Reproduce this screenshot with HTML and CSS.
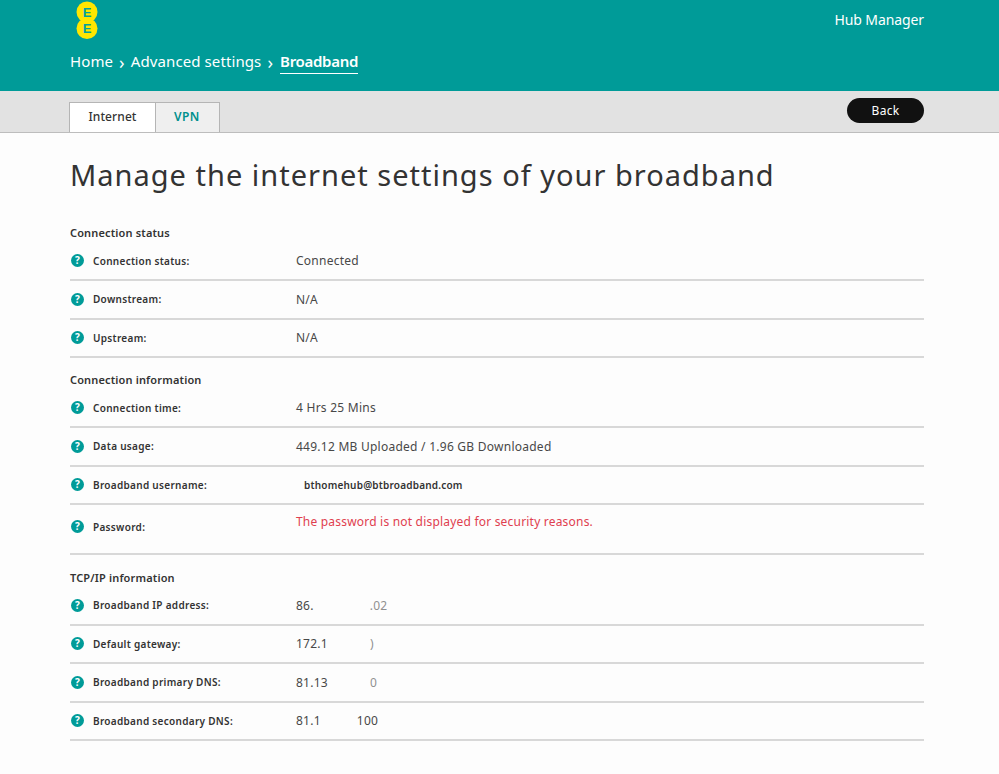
FILE: index.html
```html
<!DOCTYPE html>
<html>
<head>
  <title>Hub Manager</title>
  <link rel="stylesheet" href="styles.css">
</head>
<body>
  <div class="header">
    <div class="header-top">
      <svg class="logo" width="22" height="36" viewBox="0 0 22 36">
        <circle cx="11" cy="10" r="10.5" fill="#ffe600"/>
        <circle cx="11" cy="26.5" r="10.5" fill="#ffe600"/>
        <text x="11" y="14.7" class="logo-letter">E</text>
        <text x="11" y="31.2" class="logo-letter">E</text>
      </svg>
      <span class="app-name">Hub Manager</span>
    </div>
    <div class="breadcrumb">
      <span>Home</span>
      <span class="sep">&rsaquo;</span>
      <span>Advanced settings</span>
      <span class="sep">&rsaquo;</span>
      <span class="current">Broadband</span>
    </div>
  </div>

  <div class="tabbar">
    <div class="tabs">
      <div class="tab active">Internet</div>
      <div class="tab">VPN</div>
    </div>
    <div class="back-button">Back</div>
  </div>

  <div class="content">
    <h1 class="title">Manage the internet settings of your broadband</h1>

    <p class="section-title">Connection status</p>
    <div class="row">
      <span class="help">?</span><span class="label">Connection status:</span>
      <span class="value">Connected</span>
    </div>
    <div class="row">
      <span class="help">?</span><span class="label">Downstream:</span>
      <span class="value">N/A</span>
    </div>
    <div class="row">
      <span class="help">?</span><span class="label">Upstream:</span>
      <span class="value">N/A</span>
    </div>

    <p class="section-title">Connection information</p>
    <div class="row">
      <span class="help">?</span><span class="label">Connection time:</span>
      <span class="value">4 Hrs 25 Mins</span>
    </div>
    <div class="row">
      <span class="help">?</span><span class="label">Data usage:</span>
      <span class="value">449.12 MB Uploaded / 1.96 GB Downloaded</span>
    </div>
    <div class="row">
      <span class="help">?</span><span class="label">Broadband username:</span>
      <span class="value username">bthomehub@btbroadband.com</span>
    </div>
    <div class="row row-tall">
      <span class="help">?</span><span class="label">Password:</span>
      <span class="value warning">The password is not displayed for security reasons.</span>
    </div>

    <p class="section-title section-ip">TCP/IP information</p>
    <div class="row">
      <span class="help">?</span><span class="label">Broadband IP address:</span>
      <span class="value">86.<span class="gap gap-ip"></span><span class="faded">.02</span></span>
    </div>
    <div class="row">
      <span class="help">?</span><span class="label">Default gateway:</span>
      <span class="value">172.1<span class="gap gap-gateway"></span><span class="faded">)</span></span>
    </div>
    <div class="row">
      <span class="help">?</span><span class="label">Broadband primary DNS:</span>
      <span class="value">81.13<span class="gap gap-primary"></span><span class="faded">0</span></span>
    </div>
    <div class="row">
      <span class="help">?</span><span class="label">Broadband secondary DNS:</span>
      <span class="value">81.1<span class="gap gap-secondary"></span>100</span>
    </div>
  </div>
</body>
</html>
```

FILE: styles.css
```css
body {
  margin: 0;
  font-family: "Noto Sans", "Open Sans", sans-serif;
  background: #fdfdfd;
  color: #3a3a3a;
}

.header {
  height: 91px;
  box-sizing: border-box;
  padding: 2px 75px 0 70px;
  background: #009b98;
  color: #ffffff;
}

.header-top {
  display: flex;
  justify-content: space-between;
  height: 49px;
}

.logo {
  margin-left: 6px;
  overflow: visible;
}

.logo-letter {
  font-family: "Liberation Sans", sans-serif;
  font-size: 13px;
  font-weight: 700;
  fill: #00a09c;
  text-anchor: middle;
}

.app-name {
  margin-top: 8px;
  font-size: 14px;
  letter-spacing: -0.1px;
}

.breadcrumb {
  display: flex;
  align-items: flex-start;
  font-size: 15px;
  letter-spacing: 0.1px;
}

.sep {
  margin: 0 6px;
  font-size: 18px;
  line-height: 22px;
}

.current {
  margin-left: 1px;
  font-weight: 600;
  letter-spacing: -0.3px;
  padding-bottom: 2px;
  border-bottom: 1px solid #ffffff;
}

.tabbar {
  height: 41px;
  display: flex;
  justify-content: space-between;
  padding: 0 75px 0 69px;
  background: #e2e2e2;
  border-bottom: 1px solid #bdbdbd;
}

.tabs {
  display: flex;
  align-items: flex-end;
}

.tab {
  height: 29px;
  padding: 0 19px 0 18px;
  line-height: 27px;
  font-size: 12px;
  font-weight: 600;
  letter-spacing: 0.4px;
  color: #00908d;
  background: #efefef;
  border: 1px solid #b5b5b5;
  border-bottom: none;
  border-left: none;
}

.tab.active {
  width: 67px;
  padding: 0 9px;
  text-align: center;
  font-weight: 500;
  letter-spacing: 0.1px;
  color: #333333;
  background: #ffffff;
  border-left: 1px solid #b5b5b5;
}

.back-button {
  width: 77px;
  height: 25px;
  margin-top: 7px;
  line-height: 25px;
  text-align: center;
  font-size: 12px;
  letter-spacing: 0.3px;
  color: #ffffff;
  background: #111111;
  border-radius: 13px;
}

.content {
  padding: 0 75px 0 70px;
}

.title {
  margin: 0;
  padding-top: 22px;
  height: 56px;
  font-size: 29px;
  line-height: 40px;
  font-weight: 400;
  letter-spacing: 1px;
  color: #333333;
  white-space: nowrap;
}

.section-title {
  margin: 0;
  height: 19.5px;
  line-height: 20px;
  padding-top: 12px;
  font-size: 11px;
  font-weight: 600;
  letter-spacing: 0.15px;
  color: #333333;
}

.section-ip {
  padding-top: 13px;
}

.row {
  display: flex;
  align-items: center;
  box-sizing: border-box;
  height: 38.5px;
  border-bottom: 2px solid #d8d8d8;
}

.row-tall {
  height: 49.5px;
  align-items: flex-start;
}

.help {
  flex: none;
  width: 13px;
  height: 13px;
  margin-left: 1px;
  border-radius: 50%;
  background: #009b98;
  color: #ffffff;
  font-size: 10px;
  font-weight: 700;
  line-height: 13px;
  text-align: center;
}

.label {
  width: 203px;
  margin-left: 9px;
  font-size: 10px;
  font-weight: 600;
  letter-spacing: 0.3px;
  color: #333333;
}

.value {
  font-size: 12px;
  letter-spacing: 0.25px;
  color: #484848;
}

.username {
  margin-left: 8px;
  font-size: 10px;
  font-weight: 600;
  letter-spacing: 0.2px;
  color: #333333;
}

.warning {
  letter-spacing: 0.2px;
  color: #e0404f;
}

.row-tall .help,
.row-tall .label {
  margin-top: 15px;
}

.row-tall .warning {
  margin-top: 8px;
}

/* blanked-out part of the addresses */
.gap {
  display: inline-block;
}

.gap-ip {
  width: 56px;
}

.gap-gateway {
  width: 42px;
}

.gap-primary {
  width: 42px;
}

.gap-secondary {
  width: 36px;
}

.faded {
  opacity: 0.6;
}
```
